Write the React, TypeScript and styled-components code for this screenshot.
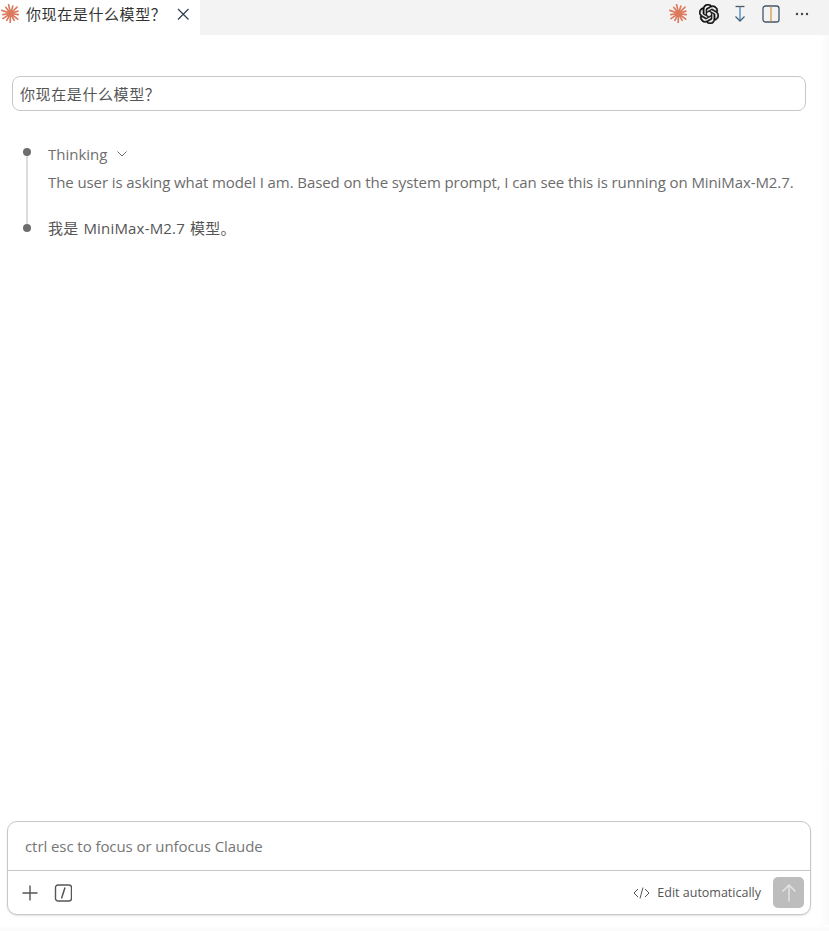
import React from "react";
import styled, { createGlobalStyle } from "styled-components";
import { SiOpenai } from "react-icons/si";

const Global = createGlobalStyle`
  html, body { margin: 0; padding: 0; background: #fff; }
  body { font-family: "Open Sans", "Noto Sans CJK SC", sans-serif; }
  * { box-sizing: border-box; }
`;

const CJK = `"Open Sans", "Noto Sans CJK SC", sans-serif`;

const Page = styled.div`
  width: 829px;
  height: 931px;
  display: flex;
  flex-direction: column;
  overflow: hidden;
  background: #fff;
  position: relative;
`;
const TabBar = styled.div`
  height: 35px;
  flex: none;
  display: flex;
  justify-content: space-between;
  background: #f3f3f3;
`;
const Tab = styled.div`
  width: 200px;
  display: flex;
  align-items: center;
  background: #fff;
  padding-left: 1px;
  padding-bottom: 8px;
  color: #333;
  font-size: 15px;
  font-family: ${CJK};
`;
const TabTitle = styled.span`
  margin-left: 6px;
  width: 150px;
  white-space: nowrap;
  letter-spacing: 0.6px;
`;
const Actions = styled.div`
  display: flex;
  align-items: center;
  height: 27px;
  padding-right: 17px;
`;
const ActionSlot = styled.div<{ $w: number }>`
  width: ${(p) => p.$w}px;
  display: flex;
  justify-content: center;
  align-items: center;
`;
const Main = styled.main`
  flex: 1;
  padding: 41px 23px 0 12px;
  display: flex;
  flex-direction: column;
`;
const UserBubble = styled.div`
  height: 35px;
  border: 1px solid #c8c8c8;
  border-radius: 8px;
  padding: 0 7px 1px;
  display: flex;
  align-items: center;
  color: #555;
  font-size: 15px;
  letter-spacing: 0.6px;
  font-family: ${CJK};
`;
const Timeline = styled.div`
  margin-top: 33px;
  margin-left: 36px;
  position: relative;
  display: flex;
  flex-direction: column;
`;
const Rail = styled.div`
  position: absolute;
  left: -22px;
  top: 7px;
  width: 2px;
  height: 76px;
  background: #dcdcdc;
`;
const Entry = styled.div`
  position: relative;
`;
const Dot = styled.span<{ $top: number }>`
  position: absolute;
  left: -25px;
  top: ${(p) => p.$top}px;
  width: 8px;
  height: 8px;
  border-radius: 50%;
  background: #6e6e6e;
`;
const ThinkingHead = styled.div`
  height: 20px;
  display: flex;
  align-items: center;
  gap: 9px;
  color: #6f6f6f;
  font-size: 15px;
  line-height: 20px;
`;
const ThinkingBody = styled.div`
  margin-top: 8px;
  color: #6c6c6c;
  font-size: 15px;
  line-height: 20px;
  white-space: nowrap;
  letter-spacing: -0.09px;
`;
const Answer = styled(Entry)`
  margin-top: 26px;
  color: #555;
  font-size: 15px;
  line-height: 20px;
  white-space: nowrap;
  word-spacing: 1px;
  letter-spacing: 0.18px;
`;
const Composer = styled.div`
  flex: none;
  margin: 0 18px 16px 7px;
  height: 94px;
  border: 1px solid #c8c8c8;
  border-radius: 10px;
  box-shadow: 0 1px 2px rgba(0, 0, 0, 0.12);
  display: flex;
  flex-direction: column;
  background: #fff;
`;
const Prompt = styled.div`
  height: 49px;
  padding: 0 17px;
  display: flex;
  align-items: center;
  color: #767676;
  font-size: 15px;
  letter-spacing: -0.07px;
  border-bottom: 1px solid #c8c8c8;
`;
const ComposerBar = styled.div`
  flex: 1;
  display: flex;
  align-items: center;
  padding: 0 6px 0 13px;
`;
const ToolIcons = styled.div`
  display: flex;
  align-items: center;
  gap: 15px;
`;
const EditMode = styled.div`
  margin-left: auto;
  display: flex;
  align-items: center;
  gap: 7px;
  color: #555;
  font-size: 12.5px;
`;
const Send = styled.div`
  width: 31px;
  height: 31px;
  margin-left: 12px;
  border-radius: 5px;
  background: #bdbdbd;
  display: flex;
  align-items: center;
  justify-content: center;
`;
const ScrollEdge = styled.div`
  position: absolute;
  right: 0;
  top: 35px;
  bottom: 0;
  width: 9px;
  background: linear-gradient(to right, #fff, #fafafa);
`;
const BottomEdge = styled.div`
  position: absolute;
  left: 0;
  right: 0;
  bottom: 0;
  height: 6px;
  background: linear-gradient(to bottom, #fff, #fafafa);
`;

const rays = [8, 38, 62, 92, 118, 146, 172, 200, 232, 258, 288, 316, 342];
const Spark = ({ size }: { size: number }) => (
  <svg width={size} height={size} viewBox="0 0 20 20" aria-hidden>
    <circle cx="10" cy="10" r="3.6" fill="#dc7a5e" />
    <g stroke="#dc7a5e" strokeWidth="1.75" strokeLinecap="round">
      {rays.map((a, i) => (
        <line
          key={a}
          x1="10"
          y1="10"
          x2={10 + (i % 2 ? 9.6 : 8.2) * Math.cos((a * Math.PI) / 180)}
          y2={10 + (i % 2 ? 9.6 : 8.2) * Math.sin((a * Math.PI) / 180)}
        />
      ))}
    </g>
  </svg>
);

const Close = () => (
  <svg width="14" height="14" viewBox="0 0 14 14" fill="none" stroke="#2c3e50" strokeWidth="1.2">
    <path d="M2 2l10.5 10.5M12.5 2L2 12.5" />
  </svg>
);
const ScrollIcon = () => (
  <svg width="16" height="18" viewBox="0 0 16 18" fill="none" strokeWidth="1.3">
    <path d="M3.500 1.500h9" stroke="#555" />
    <path d="M8 1.500V15.500" stroke="#3f86c4" />
    <path d="M3.500 11.500l4.500 4.500 4.500-4.500" stroke="#44617c" />
  </svg>
);
const SplitIcon = () => (
  <svg width="18" height="18" viewBox="0 0 18 18" fill="none" strokeWidth="1.3">
    <rect x="1" y="1" width="16" height="16" rx="2.5" stroke="#46566a" />
    <path d="M9 1.500V16.500" stroke="#d59a4a" />
  </svg>
);
const More = () => (
  <svg width="14" height="4" viewBox="0 0 14 4" fill="#444">
    <circle cx="2" cy="2" r="1.2" />
    <circle cx="7" cy="2" r="1.2" />
    <circle cx="12" cy="2" r="1.2" />
  </svg>
);
const Chevron = () => (
  <svg width="12" height="12" viewBox="0 0 12 12" fill="none" stroke="#6f6f6f" strokeWidth="1">
    <path d="M1.500 3.500L6 8l4.500-4.500" />
  </svg>
);
const Plus = () => (
  <svg width="18" height="18" viewBox="0 0 18 18" fill="none" stroke="#555" strokeWidth="1.4">
    <path d="M9 1.500v15M1.500 9h15" />
  </svg>
);
const Slash = () => (
  <svg width="18" height="18" viewBox="0 0 18 18" fill="none" stroke="#555">
    <rect x="1.500" y="1" width="16" height="16" rx="2.5" strokeWidth="1.4" />
    <path d="M11 3.500L7.500 14.500" strokeWidth="1.5" />
  </svg>
);
const Code = () => (
  <svg width="17" height="14" viewBox="0 0 17 14" fill="none" stroke="#555" strokeWidth="1">
    <path d="M5 3L1 7l4 4M12 3l4 4-4 4M10 1.500L7 12.500" />
  </svg>
);
const Up = () => (
  <svg width="18" height="20" viewBox="0 0 18 20" fill="none" stroke="#e4e4e4" strokeWidth="1.5">
    <path d="M9 18.500V2M2.500 8.500L9 2l6.500 6.500" />
  </svg>
);

export default function App() {
  return (
    <Page>
      <Global />
      <TabBar>
        <Tab>
          <Spark size={19} />
          <TabTitle>你现在是什么模型？</TabTitle>
          <Close />
        </Tab>
        <Actions>
          <ActionSlot $w={20}>
            <Spark size={19} />
          </ActionSlot>
          <ActionSlot $w={42}>
            <SiOpenai size={20} color="#111" stroke="#111" strokeWidth={0.6} />
          </ActionSlot>
          <ActionSlot $w={20}>
            <ScrollIcon />
          </ActionSlot>
          <ActionSlot $w={42}>
            <SplitIcon />
          </ActionSlot>
          <ActionSlot $w={20}>
            <More />
          </ActionSlot>
        </Actions>
      </TabBar>
      <Main>
        <UserBubble>你现在是什么模型？</UserBubble>
        <Timeline>
          <Rail />
          <Entry>
            <Dot $top={4} />
            <ThinkingHead>
              Thinking <Chevron />
            </ThinkingHead>
            <ThinkingBody>
              The user is asking what model I am. Based on the system prompt, I can see this is running on MiniMax-M2.7.
            </ThinkingBody>
          </Entry>
          <Answer>
            <Dot $top={6} />
            我是 MiniMax-M2.7 模型。
          </Answer>
        </Timeline>
      </Main>
      <Composer>
        <Prompt>ctrl esc to focus or unfocus Claude</Prompt>
        <ComposerBar>
          <ToolIcons>
            <Plus />
            <Slash />
          </ToolIcons>
          <EditMode>
            <Code />
            Edit automatically
          </EditMode>
          <Send>
            <Up />
          </Send>
        </ComposerBar>
      </Composer>
      <ScrollEdge />
      <BottomEdge />
    </Page>
  );
}
